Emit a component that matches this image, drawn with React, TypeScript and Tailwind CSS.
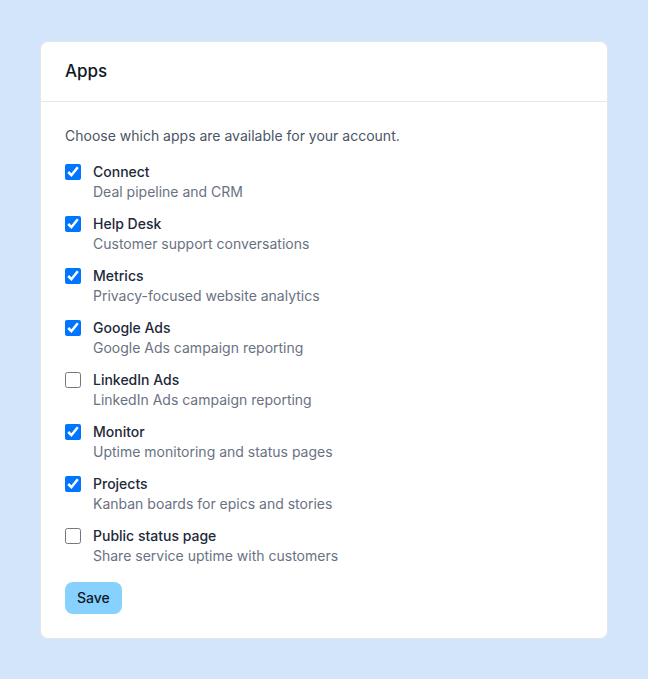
import React, { useState } from 'react';

interface AppOption {
    id: string;
    name: string;
    description: string;
    enabled: boolean;
}

const initialApps: AppOption[] = [
    { id: 'connect', name: 'Connect', description: 'Deal pipeline and CRM', enabled: true },
    { id: 'helpdesk', name: 'Help Desk', description: 'Customer support conversations', enabled: true },
    { id: 'metrics', name: 'Metrics', description: 'Privacy-focused website analytics', enabled: true },
    { id: 'google-ads', name: 'Google Ads', description: 'Google Ads campaign reporting', enabled: true },
    { id: 'linkedin-ads', name: 'LinkedIn Ads', description: 'LinkedIn Ads campaign reporting', enabled: false },
    { id: 'monitor', name: 'Monitor', description: 'Uptime monitoring and status pages', enabled: true },
    { id: 'projects', name: 'Projects', description: 'Kanban boards for epics and stories', enabled: true },
    { id: 'status-page', name: 'Public status page', description: 'Share service uptime with customers', enabled: false },
];

const App: React.FC = () => {
    const [apps, setApps] = useState<AppOption[]>(initialApps);

    const toggle = (id: string) => {
        setApps(prev => prev.map(a => (a.id === id ? { ...a, enabled: !a.enabled } : a)));
    };

    return (
        <div className="min-h-screen bg-[#d3e5fa] px-10 pt-[41px] pb-10 font-['Inter',sans-serif]">
            <section className="bg-white border border-[#e3e6ea] rounded-lg">
                <header className="h-[60px] px-6 flex items-center border-b border-[#e5e7eb]">
                    <h2 className="text-[17px] font-medium text-gray-900">Apps</h2>
                </header>
                <div className="px-6 pt-6 pb-6">
                    <p className="text-sm text-gray-600">Choose which apps are available for your account.</p>
                    <ul className="mt-4 flex flex-col gap-3">
                        {apps.map(app => (
                            <li key={app.id}>
                                <label className="flex items-start gap-3 cursor-pointer">
                                    <input
                                        type="checkbox"
                                        checked={app.enabled}
                                        onChange={() => toggle(app.id)}
                                        className="mt-0.5 h-4 w-4 shrink-0"
                                    />
                                    <span className="flex flex-col">
                                        <span className="text-sm font-medium text-gray-800">{app.name}</span>
                                        <span className="text-sm text-gray-500">{app.description}</span>
                                    </span>
                                </label>
                            </li>
                        ))}
                    </ul>
                    <button
                        type="button"
                        className="mt-4 h-8 px-3 rounded-lg bg-[#86d1fd] text-sm font-medium text-gray-900"
                    >
                        Save
                    </button>
                </div>
            </section>
        </div>
    );
};

export default App;
